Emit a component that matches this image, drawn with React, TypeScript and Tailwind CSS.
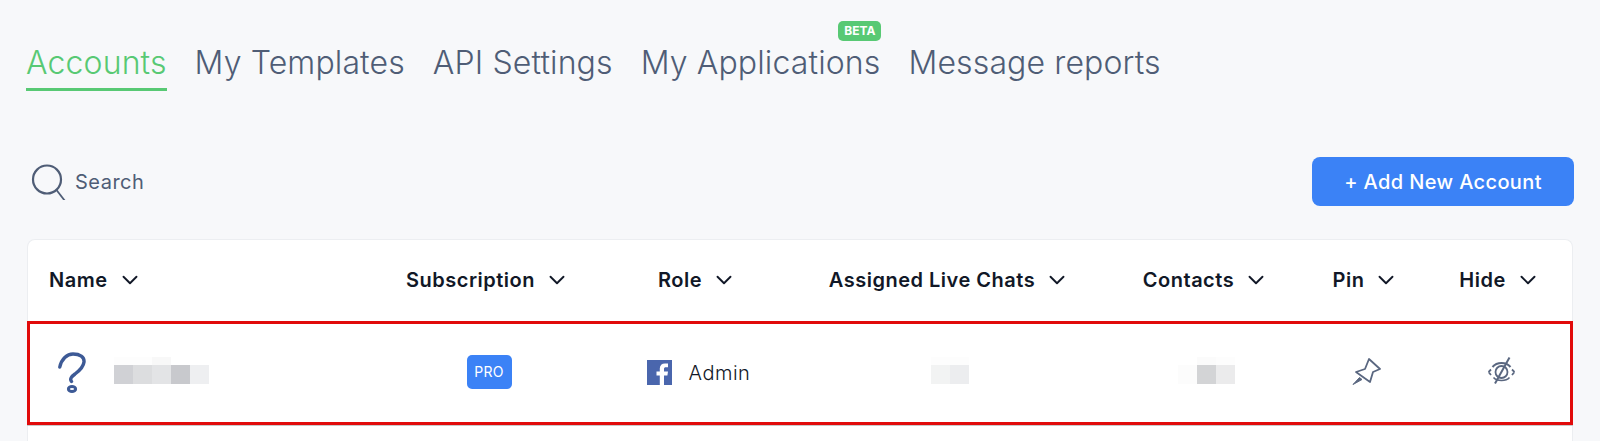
import React, { FC } from "react";
import { ChevronDown } from "lucide-react";

const TABS = ["My Templates", "API Settings", "My Applications", "Message reports"];

const COLUMNS = [
    { label: "Subscription", className: "w-[232px]" },
    { label: "Role", className: "w-[187px]" },
    { label: "Assigned Live Chats", className: "w-[317px]" },
    { label: "Contacts", className: "w-[196px]" },
    { label: "Pin", className: "w-[124px]" },
    { label: "Hide", className: "w-[144px]" },
];

// pixelated stand-in for the blurred values in the screenshot
const Blur: FC<{ cells: string[]; top?: string[]; className?: string }> = ({ cells, top, className }) => (
    <div className={`flex flex-col -mt-[5px] ${className ?? ""}`}>
        <div className="flex h-[8px]">
            {(top ?? []).map((color, i) => (
                <div key={i} className="w-[19px]" style={{ backgroundColor: color }} />
            ))}
        </div>
        <div className="flex h-[19px]">
            {cells.map((color, i) => (
                <div key={i} className="w-[19px]" style={{ backgroundColor: color }} />
            ))}
        </div>
    </div>
);

const HeaderCell: FC<{ label: string; className: string }> = ({ label, className }) => (
    <div className={`${className} flex justify-center items-center gap-[9px]`}>
        <span>{label}</span>
        <ChevronDown className="w-[26px] h-[26px]" strokeWidth={1.75} />
    </div>
);

const App: FC = () => {
    return (
        <div className="w-[1600px] h-[441px] overflow-hidden bg-[#f7f8fa] px-[27px] font-['Inter',sans-serif]">
            <nav className="flex gap-7 -ml-px pt-[41px] text-[32px] leading-[44px] font-light tracking-[0.13px] text-[#4f5d76]">
                <a className="text-[#58c974] border-b-[3px] border-[#58c974] pb-[3px]">Accounts</a>
                {TABS.map((tab) => (
                    <a key={tab} className="relative">
                        {tab}
                        {tab === "My Applications" && (
                            <span className="absolute -right-px -top-[20px] bg-[#58c974] text-white text-[12px] leading-[20px] font-bold tracking-normal px-[6px] rounded-[5px]">
                                BETA
                            </span>
                        )}
                    </a>
                ))}
            </nav>

            <div className="flex justify-between items-center mt-[66px]">
                <div className="flex items-center gap-[8px] pl-[4px] text-[20px] tracking-wide text-[#4f5d76]">
                    <svg width="36" height="36" viewBox="0 0 36 36" fill="none" stroke="#4f5d76">
                        <circle cx="16" cy="15.500" r="14" strokeWidth="2.200" />
                        <path d="M25.500 26 L34 37" strokeWidth="1.800" />
                    </svg>
                    <span>Search</span>
                </div>
                <button className="w-[262px] h-[49px] -mr-px bg-[#3b82f6] text-white text-[20px] font-medium tracking-[0.38px] rounded-lg">
                    + Add New Account
                </button>
            </div>

            <div className="mt-[33px] bg-white rounded-t-lg border border-[#eceef1] border-b-0 h-[300px]">
                <div className="flex h-[81px] pb-[2px] items-center text-[20px] font-semibold tracking-wide text-[#111827]">
                    <div className="w-[344px] pl-[21px] flex items-center gap-[9px]">
                        <span>Name</span>
                        <ChevronDown className="w-[26px] h-[26px]" strokeWidth={1.75} />
                    </div>
                    {COLUMNS.map((col) => (
                        <HeaderCell key={col.label} label={col.label} className={col.className} />
                    ))}
                </div>

                <div className="flex items-center h-[104px] border-[3px] border-[#e10a0a] shadow-[0_1px_0_#c9c9c9] -mx-px text-[#111827]">
                    <div className="w-[342px] flex items-center pl-[28px]">
                        <svg width="28" height="42" viewBox="0 0 28 42" fill="none" className="text-[#3d5a96]">
                            <path
                                d="M1.800 15 C3.500 7 9 2 15 2 C22 2 26.500 5 26 10 C25.500 15 21 19 17 22 C13.500 24.500 11.500 27 13.500 29.500"
                                stroke="currentColor"
                                strokeWidth="3.400"
                                strokeLinecap="round"
                            />
                            <ellipse cx="14" cy="37" rx="3.600" ry="2.600" stroke="currentColor" strokeWidth="3" />
                        </svg>
                        <Blur
                            className="ml-[28px]"
                            top={["#fdfdfd", "#fdfdfd", "#f8f8f8"]}
                            cells={["#d0d1d5", "#dcdddf", "#e3e4e6", "#c8c9cd", "#eeeff1"]}
                        />
                    </div>

                    <div className="w-[232px] flex justify-center pl-[2px]">
                        <span className="w-[45px] h-[34px] -mt-[3px] flex items-center justify-center bg-[#3b82f6] text-white text-[14px] tracking-wide rounded-[5px]">PRO</span>
                    </div>

                    <div className="w-[187px] flex justify-center items-center gap-[17px] pl-[2px] text-[20px] font-light tracking-wide">
                        <svg width="25" height="25" viewBox="0 0 25 25" className="-mt-[2px]">
                            <rect width="25" height="25" fill="#4a66ad" />
                            <path d="M17 25 V15.500 H20.400 L21 11.500 H17 V9 C17 7.800 17.500 7.200 18.900 7.200 H21 V3.600 C20.300 3.500 19.200 3.400 18 3.400 C14.800 3.400 12.800 5.200 12.800 8.500 V11.500 H9.500 V15.500 H12.800 V25 Z" fill="#fff" />
                        </svg>
                        <span>Admin</span>
                    </div>

                    <div className="w-[317px] flex justify-center">
                        <Blur top={["#fdfdfd", "#fdfdfd"]} cells={["#f2f3f3", "#ecedef"]} />
                    </div>

                    <div className="w-[196px] flex justify-center">
                        <Blur top={["#ffffff", "#fbfbfb", "#fdfdfd"]} cells={["#fcfcfc", "#d3d4d6", "#ebebec"]} />
                    </div>

                    <div className="w-[124px] flex justify-center -mt-[4px]">
                        <svg width="30" height="30" viewBox="0 0 30 30" fill="none" stroke="#5a6780" strokeWidth="1.800" strokeLinejoin="round">
                            <path d="M18 3 L29 13 L22 16 L19 26 L5 16 L14 13 Z" />
                            <path d="M8.500 21.500 L2 28.500 L11 23.500 Z" fill="#5a6780" strokeWidth="1" />
                        </svg>
                    </div>

                    <div className="w-[141px] flex justify-center pl-[6px] -mt-[4px]">
                        <svg width="27" height="30" viewBox="0 0 27 30" fill="none" stroke="#5a6780" strokeWidth="1.800">
                            <path d="M0.500 16 L3 13.500 M0.500 16 L3 19 M26.500 16 L24 13.500 M26.500 16 L24 19" />
                            <path d="M4.500 11 C9 5.500 18 5.500 22.500 11" strokeWidth="2" />
                            <path d="M5.500 21.500 C9 25.500 18 25.500 21.500 21.500" strokeWidth="1.600" />
                            <circle cx="13.500" cy="16" r="6" strokeWidth="1.800" />
                            <path d="M21.500 1.500 L7 27.500" strokeWidth="2" />
                        </svg>
                    </div>
                </div>
            </div>
        </div>
    );
};

export default App;
